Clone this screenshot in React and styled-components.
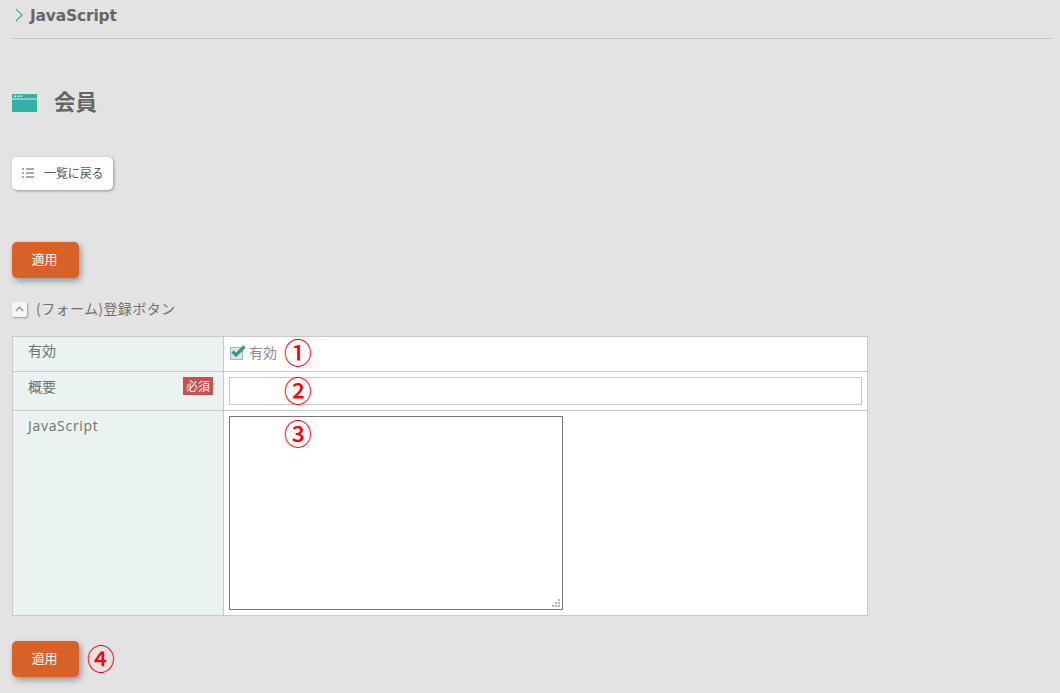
import React from 'react'
import styled, { createGlobalStyle } from 'styled-components'

const FONT = '"Noto Sans CJK JP", "DejaVu Sans", sans-serif'
const LATIN = '"Open Sans", "Noto Sans CJK JP", sans-serif'

const Global = createGlobalStyle`
  html, body {
    margin: 0;
    padding: 0;
    background: #e3e3e3;
    height: 100%;
    overflow: hidden;
  }
  body {
    font-family: ${FONT};
    color: #666;
  }
`

const Page = styled.div`
  padding: 0 8px 0 12px;
  display: flex;
  flex-direction: column;
  align-items: flex-start;
`

const Crumb = styled.div`
  align-self: stretch;
  height: 38px;
  border-bottom: 1px solid #c4c4c4;
  display: flex;
  align-items: flex-start;
  gap: 7px;

  svg { margin: 8px 0 0 3px; }
`

const CrumbText = styled.span`
  font-family: "DejaVu Sans", sans-serif;
  font-size: 15.5px;
  font-weight: 700;
  line-height: 33px;
  color: #666;
  letter-spacing: -0.2px;
`

const Title = styled.div`
  display: flex;
  align-items: center;
  gap: 17px;
  height: 28px;
  margin-top: 50px;
`

const TitleText = styled.h1`
  margin: 0;
  padding-bottom: 4px;
  font-size: 21.5px;
  font-weight: 700;
  color: #666;
  line-height: 24px;
`

const BackButton = styled.button`
  margin-top: 40px;
  width: 101px;
  height: 33px;
  background: #fff;
  border: 0;
  border-radius: 5px;
  box-shadow: 1px 1px 3px rgba(0, 0, 0, 0.35);
  display: flex;
  align-items: center;
  padding: 0 0 2px 10px;
  gap: 10px;
  font-family: ${FONT};
  font-size: 12px;
  letter-spacing: -0.1px;
  line-height: 16px;
  color: #555;
`

const ApplyButton = styled.button`
  width: 67px;
  height: 36px;
  background: #d76127;
  color: #fff;
  border: 0;
  border-radius: 5px;
  box-shadow: 2px 3px 6px rgba(0, 0, 0, 0.35);
  font-family: ${FONT};
  font-size: 13px;
  padding: 0 2px 3px 0;
`

const TopApply = styled.div`
  margin-top: 52px;
`

const Section = styled.div`
  margin-top: 21px;
  height: 18px;
  display: flex;
  align-items: center;
  gap: 9px;
  font-size: 14px;
  letter-spacing: 0.4px;
  line-height: 18px;
  color: #707070;
`

const Toggle = styled.span`
  width: 15px;
  height: 15px;
  margin-top: 2px;
  background: #f6f6f6;
  border-radius: 2px;
  box-shadow: 1px 1px 2px rgba(0, 0, 0, 0.35);
  display: flex;
  align-items: center;
  justify-content: center;
`

const Form = styled.div`
  margin-top: 19px;
  width: 856px;
  box-sizing: border-box;
  border: 1px solid #c8c8c8;
  border-bottom: 0;
  background: #fff;
`

const Row = styled.div`
  display: grid;
  grid-template-columns: 211px 1fr;
  box-sizing: border-box;
  height: ${({ $h }) => $h}px;
  border-bottom: 1px solid #c8c8c8;
`

const Label = styled.div`
  background: #eaf3f1;
  border-right: 1px solid #c8c8c8;
  padding: ${({ $pt }) => $pt}px 10px 0 15px;
  display: flex;
  justify-content: space-between;
  align-items: flex-start;
  font-size: 14px;
  line-height: 20px;
  color: #707070;
`

const Latin = styled.span`
  font-family: ${LATIN};
  font-size: 14px;
  letter-spacing: 0.7px;
`

const Required = styled.span`
  background: #c9504f;
  color: #fff;
  font-size: 12px;
  line-height: 17px;
  height: 18px;
  width: 30px;
  text-align: center;
  margin-top: 1px;
`

const Cell = styled.div`
  position: relative;
  padding: 5px;
  display: flex;
  align-items: flex-start;
`

const CheckLabel = styled.label`
  display: flex;
  align-items: center;
  gap: 3px;
  font-size: 14px;
  line-height: 20px;
  color: #8c8c8c;
  margin-left: 1px;
`

const TextBox = styled.div`
  flex: 1;
  height: 28px;
  box-sizing: border-box;
  background: #fff;
  border: 1px solid #c8c8c8;
`

const ScriptBox = styled.div`
  position: relative;
  width: 334px;
  height: 194px;
  box-sizing: border-box;
  background: #fff;
  border: 1px solid #767676;

  svg {
    position: absolute;
    right: 1px;
    bottom: 1px;
  }
`

const Mark = styled.span`
  font-family: "Noto Sans CJK JP", sans-serif;
  font-weight: 500;
  color: #ff0000;
  font-size: 28px;
  line-height: 30px;
`

const CellMark = styled(Mark)`
  position: absolute;
  left: ${({ $x }) => $x}px;
  top: ${({ $y }) => $y}px;
`

const FooterMark = styled(Mark)`
  margin: -2px 0 0 -1px;
`

const Footer = styled.div`
  margin-top: 25px;
  display: flex;
  align-items: center;
  gap: 9px;
`

const Chevron = () => (
  <svg width="8" height="14" viewBox="0 0 8 14" fill="none">
    <path d="M1 1l6 6-6 6" stroke="#3bb3a6" strokeWidth="1.2" />
  </svg>
)

const WindowIcon = () => (
  <svg width="25" height="18" viewBox="0 0 25 18">
    <rect width="25" height="18" fill="#30b3a6" />
    <rect y="4.5" width="25" height="1" fill="#e3e3e3" />
    <circle cx="3" cy="2.3" r="1" fill="#e3e3e3" />
    <circle cx="6" cy="2.3" r="1" fill="#e3e3e3" />
    <circle cx="9" cy="2.3" r="1" fill="#e3e3e3" />
  </svg>
)

const ListIcon = () => (
  <svg width="12" height="10" viewBox="0 0 12 10" fill="#aaa">
    <rect width="2" height="2" />
    <rect x="4" width="8" height="2" />
    <rect y="4" width="2" height="2" />
    <rect x="4" y="4" width="8" height="2" />
    <rect y="8" width="2" height="2" />
    <rect x="4" y="8" width="8" height="2" />
  </svg>
)

const UpIcon = () => (
  <svg width="9" height="6" viewBox="0 0 9 6" fill="none">
    <path d="M.8 5l3.7-3.7L8.2 5" stroke="#888" strokeWidth="1.2" />
  </svg>
)

const CheckIcon = () => (
  <svg width="16" height="15" viewBox="0 0 16 15" fill="none">
    <rect x="0.5" y="2.5" width="12" height="12" fill="#e4e4e4" stroke="#b0b0b0" />
    <path d="M2.5 6.500l3.500 3.500L14.500 1.500" stroke="#2c9c90" strokeWidth="3.200" />
  </svg>
)

const Grip = () => (
  <svg width="10" height="10" viewBox="0 0 10 10" fill="#b4b4b4">
    <rect x="7" y="1" width="2" height="2" />
    <rect x="4" y="4" width="2" height="2" />
    <rect x="7" y="4" width="2" height="2" />
    <rect x="1" y="7" width="2" height="2" />
    <rect x="4" y="7" width="2" height="2" />
    <rect x="7" y="7" width="2" height="2" />
  </svg>
)

const App = () => {
  return (
    <Page>
      <Global />
      <Crumb>
        <Chevron />
        <CrumbText>JavaScript</CrumbText>
      </Crumb>
      <Title>
        <WindowIcon />
        <TitleText>会員</TitleText>
      </Title>
      <BackButton>
        <ListIcon />
        一覧に戻る
      </BackButton>
      <TopApply>
        <ApplyButton>適用</ApplyButton>
      </TopApply>
      <Section>
        <Toggle><UpIcon /></Toggle>
        (フォーム)登録ボタン
      </Section>
      <Form>
        <Row $h={35}>
          <Label $pt={3}>有効</Label>
          <Cell>
            <CheckLabel>
              <CheckIcon />
              有効
            </CheckLabel>
            <CellMark $x={60} $y={0}>①</CellMark>
          </Cell>
        </Row>
        <Row $h={39}>
          <Label $pt={4}>
            概要
            <Required>必須</Required>
          </Label>
          <Cell>
            <TextBox />
            <CellMark $x={60} $y={3}>②</CellMark>
          </Cell>
        </Row>
        <Row $h={205}>
          <Label $pt={5}><Latin>JavaScript</Latin></Label>
          <Cell>
            <ScriptBox><Grip /></ScriptBox>
            <CellMark $x={60} $y={7}>③</CellMark>
          </Cell>
        </Row>
      </Form>
      <Footer>
        <ApplyButton>適用</ApplyButton>
        <FooterMark>④</FooterMark>
      </Footer>
    </Page>
  )
}

export default App
